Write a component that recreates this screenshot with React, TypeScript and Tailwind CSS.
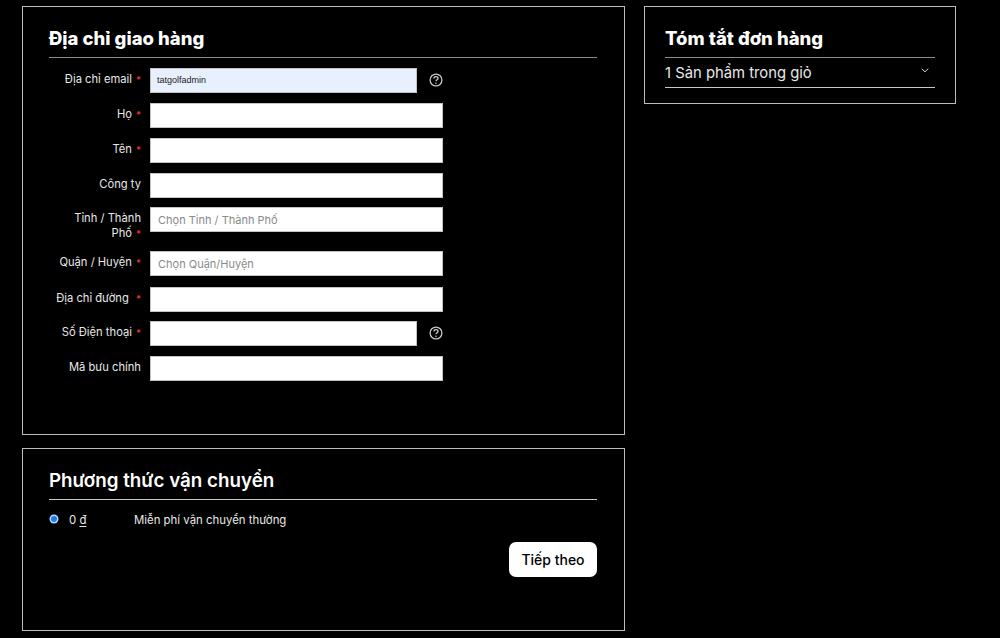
const font = { fontFamily: 'Inter, "Noto Sans", sans-serif' };

function HelpIcon() {
  return (
    <svg width="14" height="14" viewBox="0 0 14 14" fill="none" className="ml-[12px] mt-[1px]">
      <circle cx="7" cy="7" r="5.9" stroke="#c8c8c8" strokeWidth="1.3" />
      <path d="M5 5.5C5 4.4 5.9 3.7 7 3.7C8.1 3.7 9 4.4 9 5.4C9 6.7 7 6.8 7 8.3" stroke="#c8c8c8" strokeWidth="1.3" />
      <circle cx="7" cy="10.2" r="0.8" fill="#c8c8c8" />
    </svg>
  );
}

function Row({
  label,
  required,
  mt,
  value,
  placeholder,
  help,
  autofill,
}: {
  label: React.ReactNode;
  required?: boolean;
  mt: string;
  value?: string;
  placeholder?: string;
  help?: boolean;
  autofill?: boolean;
}) {
  return (
    <div className={`flex items-start ${mt}`}>
      <label className="w-[92px] pt-[4px] text-right text-[11.2px] leading-[15px] text-[#e8e8e8]">
        {label}
        {required && <span className="ml-[4px] text-[9px] font-bold leading-[9px] text-[#f0302c]">*</span>}
      </label>
      <div className="ml-[9px] flex items-start">
        <div
          className={`flex h-[25px] items-center border border-[#c2c2c2] pt-[1px] ${help ? 'w-[267px]' : 'w-[293px]'} ${autofill ? 'bg-[#e8f0fe]' : 'bg-white'}`}
        >
          {value && <span className="pl-[6px] font-['Liberation_Sans'] text-[9px] text-[#222]">{value}</span>}
          {placeholder && <span className="pl-[7px] text-[11px] text-[#8a8a8a]">{placeholder}</span>}
        </div>
        {help && (
          <div className="pt-[4px]">
            <HelpIcon />
          </div>
        )}
      </div>
    </div>
  );
}

export default function App() {
  return (
    <div className="flex h-[638px] w-[1000px] items-start overflow-hidden bg-black pl-[22px] pt-[6px] text-white" style={font}>
      <div className="w-[603px]">
        <section className="h-[429px] border border-[#bdbdbd] pl-[26px] pr-[27px]">
          <h2 className="pt-[19px] text-[18.5px] font-extrabold leading-[24px]">Địa chỉ giao hàng</h2>
          <div className="mt-[7px] border-t border-[#8c8c8c]" />
          <Row label="Địa chỉ email" required mt="mt-[10px]" value="tatgolfadmin" help autofill />
          <Row label="Họ" required mt="mt-[10px]" />
          <Row label="Tên" required mt="mt-[10px]" />
          <Row label="Công ty" mt="mt-[10px]" />
          <Row label="Tỉnh / Thành Phố" required mt="mt-[9px]" placeholder="Chọn Tỉnh / Thành Phố" />
          <Row label="Quận / Huyện" required mt="mt-[10px]" placeholder="Chọn Quận/Huyện" />
          <Row label={<>Địa chỉ đường&nbsp;</>} required mt="mt-[11px]" />
          <Row label="Số Điện thoại" required mt="mt-[9px]" help />
          <Row label="Mã bưu chính" mt="mt-[10px]" />
        </section>
        <section className="mt-[13px] h-[183px] border border-[#bdbdbd] pl-[26px] pr-[27px]">
          <h2 className="pt-[20px] text-[18.8px] font-semibold leading-[24px]">Phương thức vận chuyển</h2>
          <div className="mt-[6px] border-t border-[#c8c8c8]" />
          <div className="mt-[12px] flex h-[16px] items-center text-[11.4px] text-[#e8e8e8]">
            <span className="mb-[2px] ml-[2px] flex h-[6px] w-[6px] rounded-full bg-[#1e7bf0] ring-[1.5px] ring-[#bcd8ff]" />
            <span className="ml-[12px] w-[65px] pt-[1px]">
              0 <span className="underline underline-offset-2">đ</span>
            </span>
            <span className="pt-[1px]">Miễn phí vận chuyển thường</span>
          </div>
          <div className="mt-[14px] flex justify-end">
            <button className="h-[35px] w-[88px] rounded-[7px] bg-white text-[14px] font-medium text-black">Tiếp theo</button>
          </div>
        </section>
      </div>
      <section className="ml-[19px] h-[98px] w-[312px] border border-[#bdbdbd] px-[20px]">
        <h2 className="pt-[19px] text-[18.5px] font-extrabold leading-[24px]">Tóm tắt đơn hàng</h2>
        <div className="mt-[7px] border-t border-[#8c8c8c]" />
        <div className="flex h-[30px] items-center justify-between border-b border-[#c8c8c8] pt-[2px] text-[14.8px] text-[#e8e8e8]">
          <span>1 Sản phẩm trong giỏ</span>
          <svg width="8" height="5" viewBox="0 0 8 5" fill="none" className="mb-[7px] mr-[6px]">
            <path d="M0.7 0.7L4 3.8L7.3 0.7" stroke="#d8d8d8" strokeWidth="1" />
          </svg>
        </div>
      </section>
    </div>
  );
}
